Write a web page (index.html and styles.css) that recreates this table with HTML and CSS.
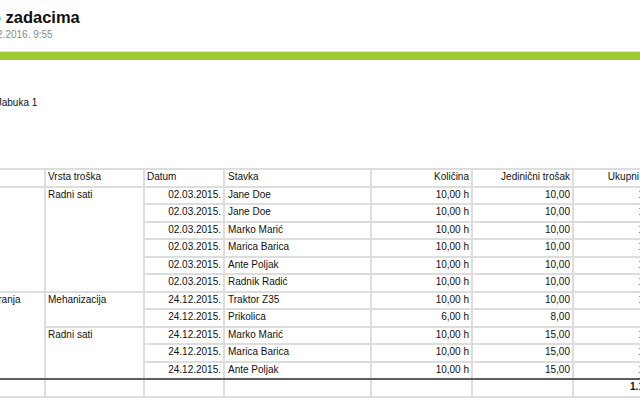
FILE: index.html
```html
<!DOCTYPE html>
<html lang="hr">
<head>
<meta charset="utf-8">
<title>Izvještaj o zadacima</title>
<link rel="stylesheet" href="styles.css">
</head>
<body>
<div class="page">
  <header class="report-head">
    <h1 class="title">Izvještaj o zadacima</h1>
    <div class="printed">Generirano: 15.02.2016. 9:55</div>
  </header>
  <div class="rule"></div>
  <div class="unit">Radna jedinica: Jabuka 1</div>
  <table class="costs">
    <colgroup>
      <col class="c-task"><col class="c-type"><col class="c-date"><col class="c-item"><col class="c-qty"><col class="c-unit"><col class="c-total">
    </colgroup>
    <thead>
      <tr><th>Zadatak</th><th>Vrsta troška</th><th>Datum</th><th class="item">Stavka</th><th class="num">Količina</th><th class="num">Jedinični trošak</th><th class="num">Ukupni trošak</th></tr>
    </thead>
    <tbody>
      <tr><td rowspan="6">Rezidba</td><td rowspan="6">Radni sati</td><td class="num">02.03.2015.</td><td class="item">Jane Doe</td><td class="num">10,00 h</td><td class="num">10,00</td><td class="num">100,00</td></tr>
      <tr><td class="num">02.03.2015.</td><td class="item">Jane Doe</td><td class="num">10,00 h</td><td class="num">10,00</td><td class="num">100,00</td></tr>
      <tr><td class="num">02.03.2015.</td><td class="item">Marko Marić</td><td class="num">10,00 h</td><td class="num">10,00</td><td class="num">100,00</td></tr>
      <tr><td class="num">02.03.2015.</td><td class="item">Marica Barica</td><td class="num">10,00 h</td><td class="num">10,00</td><td class="num">100,00</td></tr>
      <tr><td class="num">02.03.2015.</td><td class="item">Ante Poljak</td><td class="num">10,00 h</td><td class="num">10,00</td><td class="num">100,00</td></tr>
      <tr><td class="num">02.03.2015.</td><td class="item">Radnik Radić</td><td class="num">10,00 h</td><td class="num">10,00</td><td class="num">100,00</td></tr>
      <tr><td rowspan="5" class="end">Preventivna tretiranja</td><td rowspan="2">Mehanizacija</td><td class="num">24.12.2015.</td><td class="item">Traktor Z35</td><td class="num">10,00 h</td><td class="num">10,00</td><td class="num">100,00</td></tr>
      <tr><td class="num">24.12.2015.</td><td class="item">Prikolica</td><td class="num">6,00 h</td><td class="num">8,00</td><td class="num">48,00</td></tr>
      <tr><td rowspan="3" class="end">Radni sati</td><td class="num">24.12.2015.</td><td class="item">Marko Marić</td><td class="num">10,00 h</td><td class="num">15,00</td><td class="num">150,00</td></tr>
      <tr><td class="num">24.12.2015.</td><td class="item">Marica Barica</td><td class="num">10,00 h</td><td class="num">15,00</td><td class="num">150,00</td></tr>
      <tr><td class="num end">24.12.2015.</td><td class="item end">Ante Poljak</td><td class="num end">10,00 h</td><td class="num end">15,00</td><td class="num end">150,00</td></tr>
    </tbody>
    <tfoot>
      <tr><td></td><td></td><td></td><td></td><td></td><td></td><td class="num sum">1.198,00</td></tr>
    </tfoot>
  </table>
</div>
</body>
</html>
```
FILE: styles.css
```css
html, body {
  margin: 0;
  padding: 0;
  background: #ffffff;
  overflow: hidden;
}

body {
  font-family: "Liberation Sans", Arial, sans-serif;
  color: #111111;
}

.page {
  width: 780px;
  margin-left: -78px;
}

.report-head {
  padding-top: 8px;
}

.title {
  margin: 0;
  font-size: 16.5px;
  line-height: 18px;
  font-weight: bold;
  color: #111111;
}

.printed {
  margin-top: 2px;
  font-size: 10px;
  line-height: 14px;
  color: #8a8a8a;
}

.rule {
  margin-top: 9px;
  height: 8px;
  background: #9acb33;
  border-top: 1px solid #dfe8cc;
}

.unit {
  margin-top: 36px;
  padding-left: 3px;
  font-size: 10px;
  line-height: 13px;
  color: #111111;
}

.costs {
  margin-top: 59px;
  border-collapse: collapse;
  table-layout: fixed;
  width: 749px;
  font-size: 10px;
  color: #111111;
}

.c-task { width: 122px; }
.c-type { width: 99px; }
.c-date { width: 80px; }
.c-item { width: 147px; }
.c-qty { width: 101px; }
.c-unit { width: 101px; }
.c-total { width: 99px; }

.costs th,
.costs td {
  border: 2px solid #dddddd;
  padding: 0 2px 2px 2px;
  line-height: 13.5px;
  text-align: left;
  vertical-align: top;
  font-weight: normal;
  white-space: nowrap;
  overflow: hidden;
}

.costs .item {
  padding-left: 3px;
}

.costs .num {
  text-align: right;
}

.costs td.end {
  border-bottom-color: #5e5e5e;
}

.costs tfoot td {
  border-top-color: #5e5e5e;
  height: 13px;
}

.costs .sum {
  font-weight: bold;
}
```
